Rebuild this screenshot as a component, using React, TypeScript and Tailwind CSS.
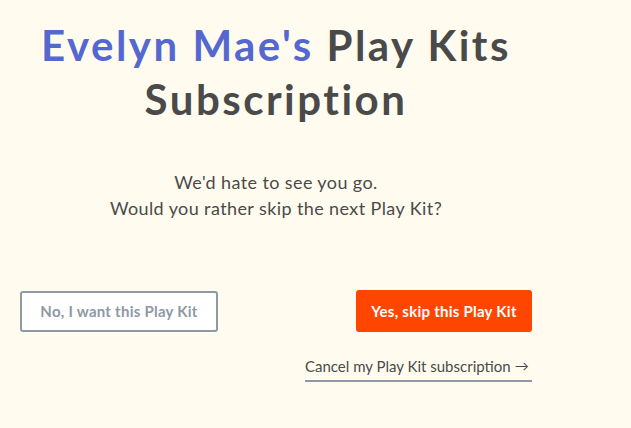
export default function App() {
  return (
    <div
      className="min-h-[428px] w-full bg-[#fffcef] text-[#4a4a4a]"
      style={{ fontFamily: '"Lato", "Noto Sans", sans-serif' }}
    >
      <div className="ml-5 flex w-[512px] flex-col pt-[18px]">
        {/* Title */}
        <h1 className="text-center text-[42px] font-bold leading-[54px] tracking-[2.5px]">
          <span className="text-[#5568cf]">Evelyn Mae's</span> Play Kits
          <br />
          Subscription
        </h1>

        {/* Message */}
        <p className="mt-[43px] text-center text-[18px] leading-[26px] tracking-[0.4px]">
          We'd hate to see you go.
          <br />
          Would you rather skip the next Play Kit?
        </p>

        {/* Actions */}
        <div className="mt-[69px] flex items-center justify-between">
          <button className="h-[41px] w-[198px] rounded-[3px] border-2 border-[#8e99a4] bg-white text-[15px] font-bold tracking-[0.25px] text-[#8e99a4]">
            No, I want this Play Kit
          </button>
          <button className="h-[42px] w-[176px] rounded-[3px] bg-[#ff4600] text-[15px] font-bold tracking-[0.25px] text-white">
            Yes, skip this Play Kit
          </button>
        </div>

        <div className="mt-[24px] flex justify-end">
          <a className="flex w-[227px] items-center gap-1 border-b-2 border-[#8e99a4] pb-[4px] text-[15px] leading-[20px] text-[#4a4a4a]">
            Cancel my Play Kit subscription
            <span className="text-[14px]">→</span>
          </a>
        </div>
      </div>
    </div>
  );
}
